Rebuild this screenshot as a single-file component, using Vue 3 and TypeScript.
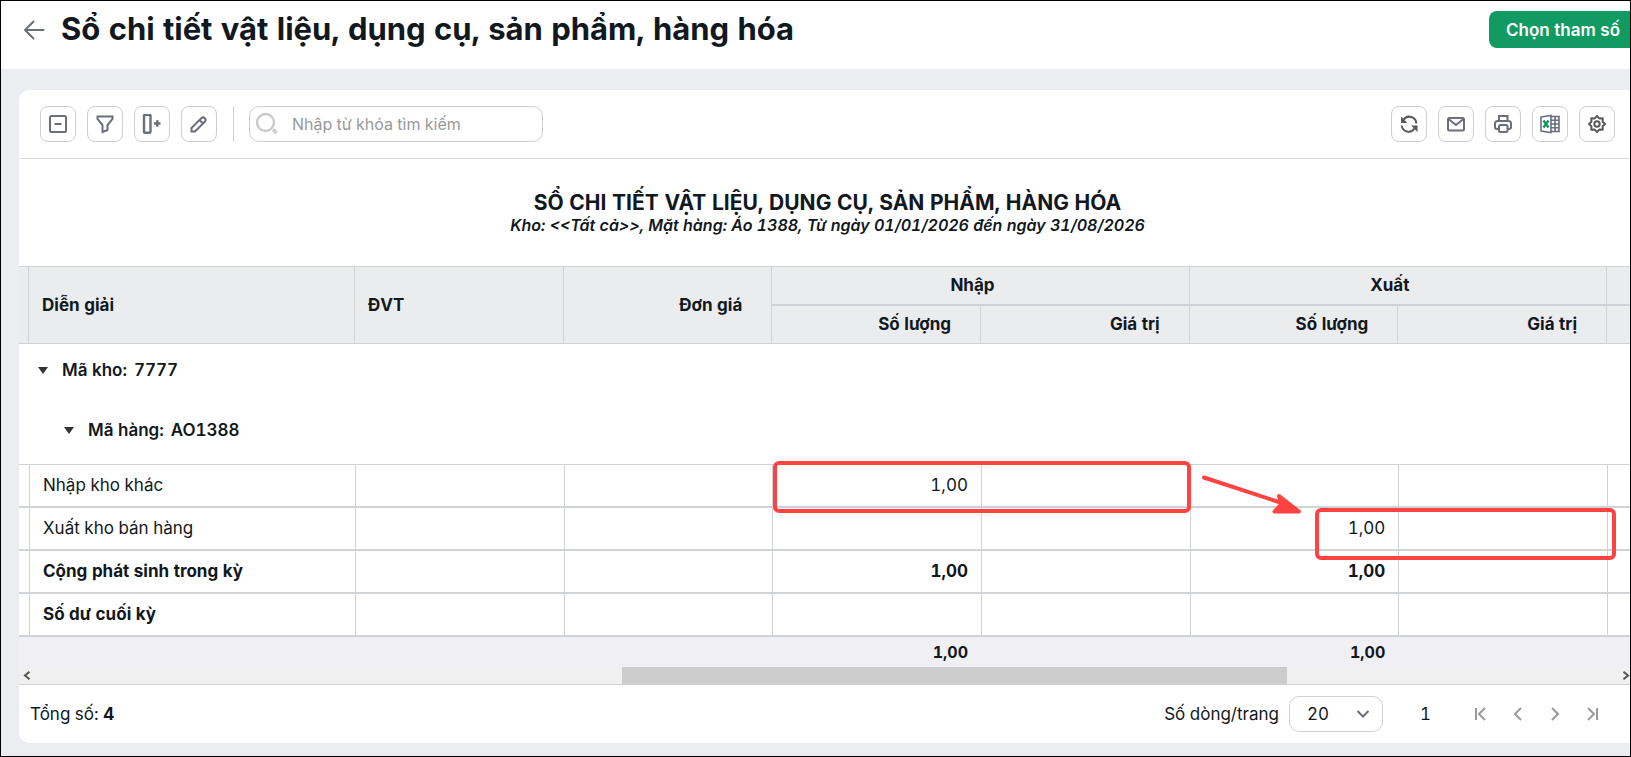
<script setup lang="ts">
import { ref } from 'vue'

interface Row {
  label: string
  inQty: string
  outQty: string
  bold: boolean
}

const keyword = ref('')
const pageSize = ref(20)
const groups = [
  { label: 'Mã kho:', value: '7777', level: 0 },
  { label: 'Mã hàng:', value: 'AO1388', level: 1 },
]
const rows: Row[] = [
  { label: 'Nhập kho khác', inQty: '1,00', outQty: '', bold: false },
  { label: 'Xuất kho bán hàng', inQty: '', outQty: '1,00', bold: false },
  { label: 'Cộng phát sinh trong kỳ', inQty: '1,00', outQty: '1,00', bold: true },
  { label: 'Số dư cuối kỳ', inQty: '', outQty: '', bold: true },
]
</script>

<template>
  <div class="page">
    <header class="header">
      <button class="back" type="button" aria-label="Quay lại">
        <svg width="22" height="20" viewBox="0 0 22 20"><path d="M20.500 10H2M10.500 1.500 2 10l8.500 8.500" /></svg>
      </button>
      <h1>Sổ chi tiết vật liệu, dụng cụ, sản phẩm, hàng hóa</h1>
      <button class="primary" type="button">Chọn tham số</button>
    </header>

    <main class="card">
      <div class="toolbar">
        <button class="tool" type="button" aria-label="Thu gọn">
          <svg viewBox="0 0 20 20"><rect x="2" y="2" width="16" height="16" rx="1.500" /><path d="M6.500 10h7" /></svg>
        </button>
        <button class="tool" type="button" aria-label="Lọc">
          <svg viewBox="0 0 20 20"><path d="M2.500 2.500h15v2.500l-5 6v5l-5 2v-7l-5-6z" /></svg>
        </button>
        <button class="tool" type="button" aria-label="Thêm cột">
          <svg viewBox="0 0 20 20"><rect x="2" y="0.800" width="6.500" height="18" rx="1" stroke-width="2.400" /><path d="M12 9.500h6.500M15.300 6.300v6.400" stroke-width="2.400" /></svg>
        </button>
        <button class="tool" type="button" aria-label="Sửa">
          <svg viewBox="0 0 20 20"><path d="M2.500 17.500v-3.500L12.500 4a2.500 2.500 0 0 1 3.500 3.500L6 17.500zM10.500 6l3.500 3.500" /></svg>
        </button>
        <span class="divider"></span>
        <label class="search">
          <svg width="24" height="24" viewBox="0 0 24 24"><circle cx="10.500" cy="10.500" r="8.500" /><path d="M18 17.500l3.500 3.500" stroke-width="3.500" /></svg>
          <input v-model="keyword" type="text" aria-label="Tìm kiếm" placeholder="Nhập từ khóa tìm kiếm" />
        </label>
        <div class="spacer"></div>
        <button class="tool dark" type="button" aria-label="Làm mới">
          <svg viewBox="0 0 20 20"><path d="M4.500 5.800A7 7 0 0 1 17.300 9.500M2.700 11.500a7 7 0 0 0 12.800 3" /><path class="fill" d="M2 2.500V9h6.500zM18.500 18v-6.500H12z" /></svg>
        </button>
        <button class="tool" type="button" aria-label="Gửi email">
          <svg viewBox="0 0 20 20"><rect x="2" y="4" width="16" height="12.500" rx="1.500" /><path d="M2.500 5l7.500 6 7.500-6" /></svg>
        </button>
        <button class="tool" type="button" aria-label="In">
          <svg viewBox="0 0 20 20"><path d="M6 7V2h8.500v5M6 15H4a2 2 0 0 1-2-2V9.500A2.500 2.500 0 0 1 4.500 7h11A2.500 2.500 0 0 1 18 9.500V13a2 2 0 0 1-2 2h-1.500" /><rect x="6" y="11" width="8.500" height="7" rx="1.500" /></svg>
        </button>
        <button class="tool" type="button" aria-label="Xuất Excel">
          <svg viewBox="0 0 20 20"><path d="M1 3 11 1.500v17L1 17z" stroke-width="1.600" /><path d="M11 2.500h8v15h-8M11 6.300h8M11 10h8M11 13.700h8M15 2.500v15" stroke-width="1.600" /><path class="green" d="M3.500 6.500l5 7M8.500 6.500l-5 7" /></svg>
        </button>
        <button class="tool dark" type="button" aria-label="Thiết lập">
          <svg viewBox="0 0 20 20"><circle cx="10" cy="10" r="2.700" /><path d="M10 2l2.300 2.400 3.400-.1-.1 3.400L18 10l-2.400 2.300.1 3.400-3.400-.1L10 18l-2.300-2.400-3.400.1.1-3.400L2 10l2.400-2.300-.1-3.400 3.400.1z" stroke-linejoin="round" /></svg>
        </button>
      </div>

      <div class="report-title">
        <h2>SỔ CHI TIẾT VẬT LIỆU, DỤNG CỤ, SẢN PHẨM, HÀNG HÓA</h2>
        <p>Kho: &lt;&lt;Tất cả&gt;&gt;, Mặt hàng: Áo 1388, Từ ngày 01/01/2026 đến ngày 31/08/2026</p>
      </div>

      <div class="grid">
        <table>
          <colgroup>
            <col class="edge" /><col class="desc" /><col /><col /><col /><col /><col /><col /><col class="tail" />
          </colgroup>
          <thead>
            <tr>
              <th rowspan="2"></th>
              <th rowspan="2">Diễn giải</th>
              <th rowspan="2">ĐVT</th>
              <th rowspan="2" class="num">Đơn giá</th>
              <th colspan="2" class="band">Nhập</th>
              <th colspan="2" class="band">Xuất</th>
              <th class="band last"></th>
            </tr>
            <tr>
              <th class="num sub">Số lượng</th>
              <th class="num sub">Giá trị</th>
              <th class="num sub">Số lượng</th>
              <th class="num sub">Giá trị</th>
              <th class="sub last"></th>
            </tr>
          </thead>
          <tbody>
            <tr v-for="g in groups" :key="g.label" class="group">
              <td colspan="9">
                <div class="group-line" :class="{ nested: g.level === 1 }">
                  <button type="button" class="caret" :aria-label="'Thu gọn ' + g.value">
                    <svg width="10" height="7" viewBox="0 0 10 7"><path d="M0 0h10L5 7z" /></svg>
                  </button>
                  <span>{{ g.label }}</span><span>{{ g.value }}</span>
                </div>
              </td>
            </tr>
            <tr v-for="r in rows" :key="r.label" class="data" :class="{ bold: r.bold }">
              <td></td>
              <td>{{ r.label }}</td>
              <td></td>
              <td></td>
              <td class="num">{{ r.inQty }}</td>
              <td></td>
              <td class="num">{{ r.outQty }}</td>
              <td></td>
              <td></td>
            </tr>
          </tbody>
          <tfoot>
            <tr>
              <td colspan="4"></td>
              <td class="num">1,00</td>
              <td></td>
              <td class="num">1,00</td>
              <td colspan="2"></td>
            </tr>
          </tfoot>
        </table>
        <div class="scrollbar">
          <svg width="8" height="9" viewBox="0 0 8 9"><path d="M6.500.800 2 4.500l4.500 3.700" /></svg>
          <div class="track"><div class="thumb"></div></div>
          <svg width="8" height="9" viewBox="0 0 8 9"><path d="M1.500.800 6 4.500 1.500 8.200" /></svg>
        </div>
        <svg class="marks" width="850" height="106" viewBox="0 0 850 106" aria-hidden="true">
          <rect x="5" y="5" width="414" height="48" rx="4" />
          <rect x="547" y="52" width="297" height="48" rx="4" />
          <path d="M434 19.500 512 45" />
          <path class="head" d="M529 53.500 509 38l2.500 8-7 7.500z" />
        </svg>
      </div>

      <footer class="pager">
        <span>Tổng số: <b>4</b></span>
        <div class="spacer"></div>
        <label for="page-size">Số dòng/trang</label>
        <div class="select">
          <select id="page-size" v-model="pageSize">
            <option :value="20">20</option>
            <option :value="50">50</option>
          </select>
          <svg width="14" height="8" viewBox="0 0 14 8"><path d="M1.500 1 7 6.500 12.500 1" /></svg>
        </div>
        <span class="current">1</span>
        <nav aria-label="Phân trang">
          <button type="button" aria-label="Trang đầu"><svg viewBox="0 0 14 14"><path d="M2 1v12M11 1 5 7l6 6" /></svg></button>
          <button type="button" aria-label="Trang trước"><svg viewBox="0 0 14 14"><path d="M10 1 4 7l6 6" /></svg></button>
          <button type="button" aria-label="Trang sau"><svg viewBox="0 0 14 14"><path d="M4 1l6 6-6 6" /></svg></button>
          <button type="button" aria-label="Trang cuối"><svg viewBox="0 0 14 14"><path d="M3 1l6 6-6 6M12 1v12" /></svg></button>
        </nav>
      </footer>
    </main>
  </div>
</template>

<style>
body {
  margin: 0;
}
</style>

<style scoped>
* {
  box-sizing: border-box;
}
.page {
  min-height: 100vh;
  display: flex;
  flex-direction: column;
  overflow: hidden;
  border: 1px solid #000;
  background: #ecedf1;
  color: #111820;
  font-family: Inter, "Noto Sans", sans-serif;
  font-size: 17px;
  font-variant-numeric: tabular-nums;
  line-height: 23px;
}
button {
  padding: 0;
  border: 0;
  background: none;
  font: inherit;
  color: inherit;
}
svg {
  display: block;
  fill: none;
}
.header {
  display: flex;
  align-items: flex-start;
  height: 68px;
  padding: 10px 0 0 22px;
  background: #fff;
}
.back {
  display: flex;
  align-items: center;
  height: 37px;
  margin-right: 16px;
}
.back svg {
  stroke: #6b6e7b;
  stroke-width: 2;
  stroke-linecap: round;
  stroke-linejoin: round;
}
h1 {
  flex: 1;
  margin: 0;
  font-size: 31px;
  font-weight: 700;
  font-optical-sizing: none;
  line-height: 36px;
  white-space: nowrap;
}
.primary {
  height: 37px;
  margin-right: -7px;
  padding: 0 17px;
  border-radius: 8px;
  background: #119a62;
  color: #fff;
  font-weight: 600;
  line-height: 24px;
  white-space: nowrap;
}
.card {
  margin: 21px 0 13px 18px;
  border-radius: 10px 0 0 10px;
  background: #fff;
}
.toolbar {
  display: flex;
  align-items: center;
  gap: 11px;
  padding: 16px 15px 16px 21px;
  border-bottom: 1px solid #dadcdf;
}
.tool {
  display: flex;
  align-items: center;
  justify-content: center;
  width: 36px;
  height: 36px;
  border: 1px solid #cdcfd4;
  border-radius: 8px;
  background: #fff;
}
.tool svg {
  width: 20px;
  height: 20px;
  stroke: #6b6e7b;
  stroke-width: 2;
}
.tool.dark svg {
  stroke: #5a5a5a;
}
.tool .fill {
  fill: #5a5a5a;
  stroke: none;
}
.tool .green {
  stroke: #119a62;
  stroke-width: 2.4;
}
.divider {
  width: 1px;
  height: 36px;
  margin: 0 4px 0 5px;
  background: #cdcfd4;
}
.search {
  display: flex;
  align-items: center;
  gap: 13px;
  width: 294px;
  height: 36px;
  padding: 0 5px;
  border: 1px solid #cdcfd4;
  border-radius: 10px;
}
.search svg {
  stroke: #cacaca;
  stroke-width: 2.4;
}
.search input {
  flex: 1;
  min-width: 0;
  padding: 0;
  border: 0;
  outline: 0;
  background: none;
  font: inherit;
  font-size: 16px;
}
.search input::placeholder {
  color: #999;
}
.spacer {
  flex: 1;
}
.report-title {
  padding: 32px 0 31px 6px;
  text-align: center;
}
.report-title h2 {
  margin: 0;
  font-size: 21px;
  font-weight: 700;
  line-height: 24px;
}
.report-title p {
  margin: 0;
  font-size: 16px;
  font-weight: 600;
  font-style: italic;
  line-height: 20px;
}
.grid {
  position: relative;
}
table {
  width: 100%;
  table-layout: fixed;
  border-collapse: separate;
  border-spacing: 0;
}
.edge {
  width: 10px;
}
.desc {
  width: 326px;
}
.tail {
  width: 23px;
}
th {
  padding: 0 29px 0 13px;
  border: 1px solid #cfd2d7;
  border-left: 0;
  background: #ebecee;
  font-weight: 700;
  text-align: left;
}
th:first-child:not(.sub),
td:first-child {
  padding: 0;
}
th.num {
  text-align: right;
}
th.band {
  height: 39px;
  text-align: center;
}
th.sub {
  height: 39px;
}
th.last {
  padding: 0;
  border-right: 0;
}
.group td {
  height: 60px;
  vertical-align: top;
}
.group-line {
  display: flex;
  align-items: center;
  gap: 7px;
  height: 52px;
  padding-left: 19px;
  font-weight: 600;
}
.group-line.nested {
  padding-left: 45px;
}
.caret {
  margin-right: 7px;
}
.caret svg {
  fill: #333;
}
.data td {
  height: 43px;
  padding: 0 13px;
  border: 1px solid #cfd2d7;
  border-right: 0;
}
.data td:first-child {
  padding: 0;
  border-left: 0;
}
.data.bold {
  font-weight: 700;
}
td.num {
  text-align: right;
}
tfoot td {
  height: 31px;
  padding: 0 13px;
  border-top: 1px solid #cfd2d7;
  background: #f0f0f4;
  font-size: 16px;
  font-weight: 700;
}
.scrollbar {
  display: flex;
  align-items: center;
  height: 18px;
  padding-left: 4px;
  border-bottom: 1px solid #cfd2d7;
  background: #f0f0f0;
  overflow: hidden;
}
.scrollbar svg {
  flex: none;
  stroke: #555;
  stroke-width: 2;
}
.track {
  flex: 1;
  height: 17px;
  margin: 0 3px 0 5px;
}
.thumb {
  width: 42%;
  height: 17px;
  margin-left: 37%;
  background: #ccc;
}
.marks {
  position: absolute;
  top: 192px;
  left: 751px;
  stroke: #ff4343;
  stroke-width: 4;
  stroke-linecap: round;
  stroke-linejoin: round;
  pointer-events: none;
}
.marks .head {
  fill: #ff4343;
}
.pager {
  display: flex;
  align-items: center;
  height: 58px;
  padding: 0 31px 0 11px;
}
.select {
  display: flex;
  position: relative;
  align-items: center;
  margin: 0 37px 0 10px;
}
select {
  appearance: none;
  width: 94px;
  height: 36px;
  padding: 0 17px;
  border: 1px solid #cdcfd4;
  border-radius: 10px;
  background: #fff;
  color: inherit;
  font: inherit;
}
.select svg {
  position: absolute;
  right: 13px;
  stroke: #6b6e7b;
  stroke-width: 2;
  pointer-events: none;
}
.current {
  margin-right: 43px;
}
nav {
  display: flex;
  gap: 23px;
}
nav svg {
  width: 14px;
  height: 14px;
  stroke: #9a9a9a;
  stroke-width: 2;
}
</style>
